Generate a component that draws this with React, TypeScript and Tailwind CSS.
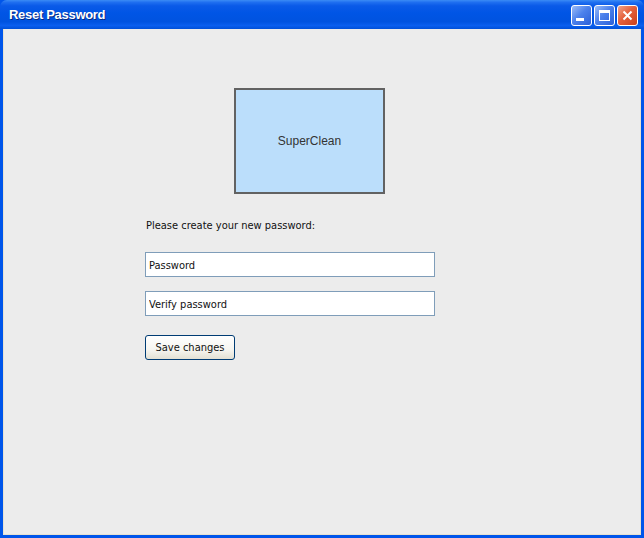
const TitleButton = ({ kind }: { kind: 'min' | 'max' | 'close' }) => {
  const isClose = kind === 'close';
  return (
    <div
      className={`w-[21px] h-[21px] rounded-[3px] border border-white flex items-center justify-center ${
        isClose
          ? 'bg-[linear-gradient(135deg,#f0a48a_0%,#e5603c_45%,#c9401c_100%)]'
          : 'bg-[linear-gradient(135deg,#9bbcf7_0%,#4d82ec_45%,#2a5fd8_100%)]'
      }`}
    >
      {kind === 'min' && <div className="w-[8px] h-[3px] bg-white mt-[9px] -ml-[3px]" />}
      {kind === 'max' && (
        <div className="w-[11px] h-[11px] border border-white border-t-[3px]" />
      )}
      {kind === 'close' && (
        <svg width="11" height="11" viewBox="0 0 11 11">
          <path d="M1.5 1.5 L9.5 9.5 M9.5 1.5 L1.5 9.5" stroke="white" strokeWidth="2" />
        </svg>
      )}
    </div>
  );
};

export default function App() {
  return (
    <div className="w-[644px] h-[538px] flex flex-col bg-[#0055ea] font-['Liberation_Sans',Arial,sans-serif]">
      {/* Title bar */}
      <div className="h-[29px] shrink-0 flex items-center justify-between pl-[9px] pr-[6px] rounded-t-[7px] bg-[linear-gradient(180deg,#3b8cf5_0%,#1f6ff0_8%,#0a5ae8_20%,#0055e5_45%,#0053e0_75%,#0a5fef_88%,#0050d8_100%)]">
        <span className="text-white text-[13px] font-bold [text-shadow:1px_1px_0_#0a2a80] tracking-[-0.3px]">
          Reset Password
        </span>
        <div className="flex gap-[2px] pt-[1px]">
          <TitleButton kind="min" />
          <TitleButton kind="max" />
          <TitleButton kind="close" />
        </div>
      </div>

      {/* Client area */}
      <div className="flex-1 mx-[3px] mb-[3px] border border-t-0 border-[#e6e2d2] bg-[#ececec]">
        <div className="flex flex-col pl-[141px] pt-[59px] font-['DejaVu_Sans_Condensed','DejaVu_Sans',sans-serif]">
          <div className="ml-[89px] w-[151px] h-[106px] border-2 border-[#626262] bg-[#bbdefb] flex items-center justify-center">
            <span className="text-[12px] text-[#333] font-['Liberation_Sans',Arial,sans-serif]">SuperClean</span>
          </div>

          <div className="mt-[25px] pl-[1px] text-[11px] leading-[13px] text-[#111]">
            Please create your new password:
          </div>

          <input
            className="mt-[20px] w-[290px] h-[25px] border border-[#7f9db9] bg-white px-[3px] pt-[1px] text-[11px] text-[#111] placeholder:text-[#111] outline-none"
            placeholder="Password"
          />
          <input
            className="mt-[14px] w-[290px] h-[25px] border border-[#7f9db9] bg-white px-[3px] pt-[1px] text-[11px] text-[#111] placeholder:text-[#111] outline-none"
            placeholder="Verify password"
          />

          <button className="mt-[19px] w-[90px] h-[25px] pt-[1px] rounded-[3px] border border-[#003c74] bg-[linear-gradient(180deg,#ffffff_0%,#f6f5f0_60%,#e3e0d3_100%)] text-[11px] text-[#111]">
            Save changes
          </button>
        </div>
      </div>
    </div>
  );
}
